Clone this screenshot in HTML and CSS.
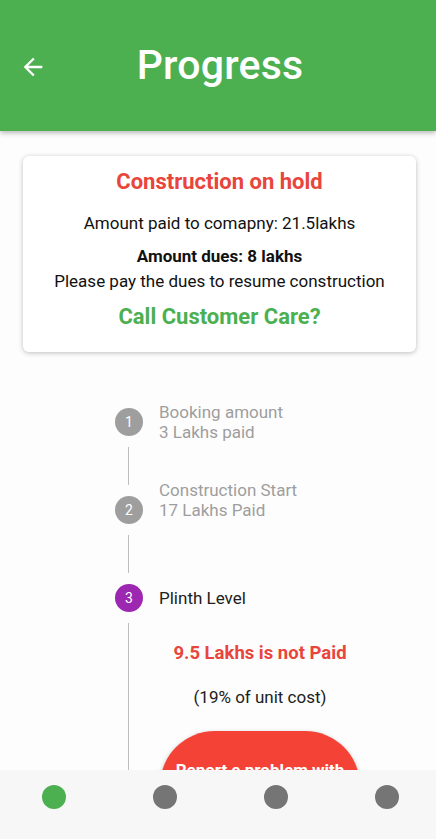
FILE: index.html
```html
<!DOCTYPE html>
<html>
<head>
<meta charset="utf-8">
<link rel="stylesheet" href="styles.css">
</head>
<body>
<div class="page">
  <header class="appbar">
    <svg class="back" width="28" height="28" viewBox="0 0 24 24"><path fill="#fff" d="M20 11H7.83l5.59-5.59L12 4l-8 8 8 8 1.41-1.41L7.83 13H20v-2z"/></svg>
    <h1 class="title">Progress</h1>
  </header>

  <section class="card">
    <div class="card-title">Construction on hold</div>
    <div class="line paid">Amount paid to comapny: 21.5lakhs</div>
    <div class="line dues">Amount dues: 8 lakhs</div>
    <div class="line please">Please pay the dues to resume construction</div>
    <div class="call">Call Customer Care?</div>
  </section>

  <section class="stepper">
    <div class="step-head">
      <span class="circle done">1</span>
      <div class="step-text muted">Booking amount<br>3 Lakhs paid</div>
    </div>
    <div class="connector"></div>
    <div class="step-head">
      <span class="circle done">2</span>
      <div class="step-text muted extra">Construction Start<br>17 Lakhs Paid</div>
    </div>
    <div class="connector"></div>
    <div class="step-head">
      <span class="circle active">3</span>
      <div class="step-text">Plinth Level</div>
    </div>
    <div class="step-body">
      <div class="body-inner">
        <div class="not-paid">9.5 Lakhs is not Paid</div>
        <div class="percent">(19% of unit cost)</div>
        <div class="report">Report a problem with construction</div>
      </div>
    </div>
  </section>

  <nav class="bottom-nav">
    <span class="dot green"></span>
    <span class="dot"></span>
    <span class="dot"></span>
    <span class="dot"></span>
  </nav>
</div>
</body>
</html>
```

FILE: styles.css
```css
* { box-sizing: border-box; }
html, body {
  margin: 0;
  padding: 0;
  width: 436px;
  height: 839px;
  overflow: hidden;
  background: #fdfdfd;
  font-family: Roboto, "Noto Sans", sans-serif;
  color: #111;
}
.page {
  position: relative;
  height: 839px;
  overflow: hidden;
}
.appbar {
  height: 131px;
  background: #4caf50;
  display: flex;
  align-items: center;
  justify-content: center;
  position: relative;
  box-shadow: 0 2px 5px rgba(0,0,0,0.28);
  z-index: 2;
}
.back {
  position: absolute;
  left: 19px;
  top: 53px;
}
.title {
  margin: -2px 0 0 4px;
  color: #fff;
  font-size: 41px;
  font-weight: 500;
  line-height: 48px;
  letter-spacing: 0.2px;
}
.card {
  margin: 25px 0 0 23px;
  width: 393px;
  height: 196px;
  background: #fff;
  border-radius: 6px;
  box-shadow: 0 1px 5px rgba(0,0,0,0.25);
  padding-top: 13px;
  text-align: center;
}
.card-title {
  color: #e8453c;
  font-size: 22px;
  font-weight: 700;
  line-height: 26px;
}
.line {
  font-size: 17px;
  line-height: 20px;
  color: #111;
}
.paid { margin-top: 18px; }
.dues { margin-top: 13px; font-weight: 700; }
.please { margin-top: 5px; }
.call {
  margin-top: 13px;
  color: #4caf50;
  font-size: 22px;
  font-weight: 700;
  line-height: 26px;
}
.stepper {
  margin-top: 56px;
  padding-left: 115px;
}
.step-head {
  display: flex;
  align-items: center;
  height: 28px;
  gap: 16px;
}
.circle {
  flex: none;
  width: 28px;
  height: 28px;
  border-radius: 50%;
  color: #fff;
  font-size: 14px;
  display: flex;
  align-items: center;
  justify-content: center;
}
.circle.done { background: #9e9e9e; }
.circle.active { background: #9c27b0; }
.step-text {
  font-size: 17px;
  line-height: 20px;
  color: #212121;
}
.step-text.muted { color: #9e9e9e; }
.step-text.extra { padding-bottom: 20px; }
.connector {
  margin: 11px 0 11px 13px;
  width: 1px;
  height: 38px;
  background: #bdbdbd;
}
.step-body {
  margin: 11px 0 0 13px;
  border-left: 1px solid #bdbdbd;
  height: 300px;
}
.body-inner {
  margin-left: 31px;
  width: 200px;
  padding-top: 18px;
  text-align: center;
}
.not-paid {
  color: #e8453c;
  font-size: 18.5px;
  font-weight: 700;
  line-height: 24px;
}
.percent {
  margin-top: 22px;
  font-size: 17px;
  line-height: 20px;
  color: #212121;
}
.report {
  margin-top: 24px;
  width: 200px;
  height: 110px;
  border-radius: 55px;
  background: #f44336;
  color: #fff;
  font-size: 17px;
  font-weight: 700;
  line-height: 24px;
  padding: 27px 4px 0;
  text-align: center;
  box-shadow: 0 2px 5px rgba(0,0,0,0.3);
}
.bottom-nav {
  position: absolute;
  left: -1px;
  bottom: 0;
  width: 443px;
  height: 69px;
  background: #f7f7f7;
  display: grid;
  grid-template-columns: repeat(4, 1fr);
  justify-items: center;
  align-items: start;
  padding-top: 15px;
  z-index: 3;
}
.dot {
  width: 24px;
  height: 24px;
  border-radius: 50%;
  background: #757575;
}
.dot.green { background: #4caf50; }
```
